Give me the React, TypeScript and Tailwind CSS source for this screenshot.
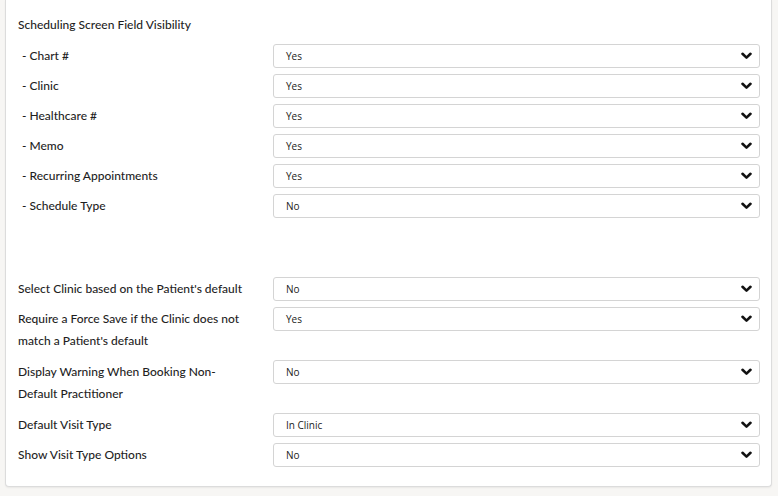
import React from 'react';

interface Field {
  label: string;
  value: string;
  indent?: boolean;
  tall?: boolean;
}

const visibility: Field[] = [
  { label: '- Chart #', value: 'Yes', indent: true },
  { label: '- Clinic', value: 'Yes', indent: true },
  { label: '- Healthcare #', value: 'Yes', indent: true },
  { label: '- Memo', value: 'Yes', indent: true },
  { label: '- Recurring Appointments', value: 'Yes', indent: true },
  { label: '- Schedule Type', value: 'No', indent: true },
];

const options: Field[] = [
  { label: "Select Clinic based on the Patient's default", value: 'No' },
  { label: "Require a Force Save if the Clinic does not match a Patient's default", value: 'Yes', tall: true },
  { label: 'Display Warning When Booking Non-Default Practitioner', value: 'No', tall: true },
  { label: 'Default Visit Type', value: 'In Clinic' },
  { label: 'Show Visit Type Options', value: 'No' },
];

function Chevron() {
  return (
    <svg width="11" height="8" viewBox="0 0 11 8" className="shrink-0">
      <polyline points="1.5,1.8 5.5,5.6 9.5,1.8" fill="none" stroke="#111" strokeWidth="2.6" strokeLinecap="round" strokeLinejoin="round" />
    </svg>
  );
}

function Row({ field }: { field: Field }) {
  return (
    <div className={`flex items-start ${field.tall ? 'mb-[8px]' : 'mb-[6px]'}`}>
      <div className={`w-[255px] shrink-0 pr-[24px] pt-[1px] leading-[22px] text-[12px] font-medium text-[#1f1f1f] ${field.indent ? 'pl-[4px]' : ''}`}>
        {field.label}
      </div>
      <div className="flex-1 h-[24px] flex items-center justify-between pl-[12px] pr-[7px] bg-white border border-[#d4d4d4] rounded-[3px]">
        <span className="text-[10px] text-[#222] pt-[1px]" style={{ fontFamily: '"Open Sans", sans-serif' }}>{field.value}</span>
        <Chevron />
      </div>
    </div>
  );
}

export default function App() {
  return (
    <div className="w-[778px] h-[496px] bg-[#f7f6f4] pl-[5px] pr-[6px] overflow-hidden" style={{ fontFamily: 'Lato, "Liberation Sans", sans-serif' }}>
      <div className="bg-white border border-t-0 border-[#dcdcdc] rounded-b-[4px] shadow-[0_1px_2px_rgba(0,0,0,0.06)] pl-[12px] pr-[11px] pt-[13px] pb-[13px]">
        <div className="pt-[1px] leading-[22px] text-[12px] font-medium text-[#1f1f1f] mb-[8px]">Scheduling Screen Field Visibility</div>
        {visibility.map((f) => (
          <Row key={f.label} field={f} />
        ))}
        <div className="h-[53px]" />
        {options.map((f) => (
          <Row key={f.label} field={f} />
        ))}
      </div>
    </div>
  );
}
